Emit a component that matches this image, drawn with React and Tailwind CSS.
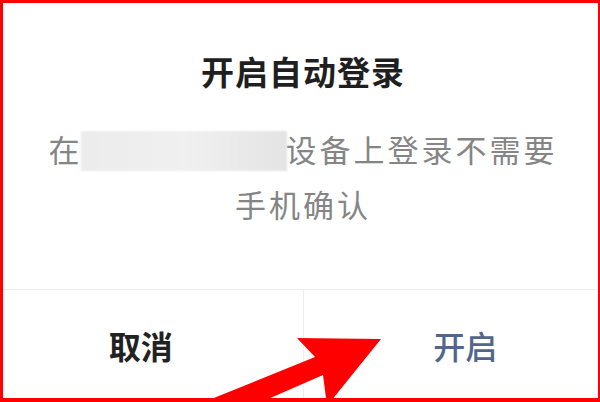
import React from 'react'

const cjk = { fontFamily: '"Noto Sans CJK SC", "Noto Sans", sans-serif' }

function Arrow() {
    // red annotation arrow pointing at the confirm button
    return (
        <svg className="absolute inset-0 pointer-events-none" width="600" height="402" viewBox="0 0 600 402">
            <polygon
                points="194,406 315,357 297,338 381,339 327,406 323,375 252,406"
                fill="#ff0000"
            />
        </svg>
    )
}

export default function App() {
    return (
        <div className="relative w-[600px] h-[402px] overflow-hidden bg-white" style={cjk}>
            <div className="w-[648px] ml-[-21px] flex flex-col">
                <h1 className="pt-[51px] text-center text-[33px] leading-[40px] tracking-[1px] font-semibold text-[#1f1f1f]">
                    开启自动登录
                </h1>

                <p className="mt-[31px] text-center text-[31px] leading-[53px] tracking-[3px] text-[#858585]">
                    在
                    <span className="inline-block align-middle w-[206px] h-[40px] mb-[6px] ml-[-2px] mr-[-1px] bg-gradient-to-r from-[#ececec] via-[#f0f0f0] to-[#e4e4e4] blur-[1px]" />
                    设备上登录不需要
                    <br />
                    手机确认
                </p>

                <div className="mt-[59px] flex border-t border-[#ededed]">
                    <button className="flex-1 h-[110px] flex items-center justify-center text-[32px] font-semibold text-[#222222]">
                        取消
                    </button>
                    <button className="flex-1 h-[110px] flex items-center justify-center border-l border-[#ededed] text-[32px] font-medium text-[#53658c]">
                        开启
                    </button>
                </div>
            </div>

            <Arrow />

            {/* red frame round the screenshot */}
            <div className="absolute inset-0 pointer-events-none border-t-[3px] border-l-[3px] border-r-[2px] border-b-[4px] border-[#ff0000]" />
        </div>
    )
}
